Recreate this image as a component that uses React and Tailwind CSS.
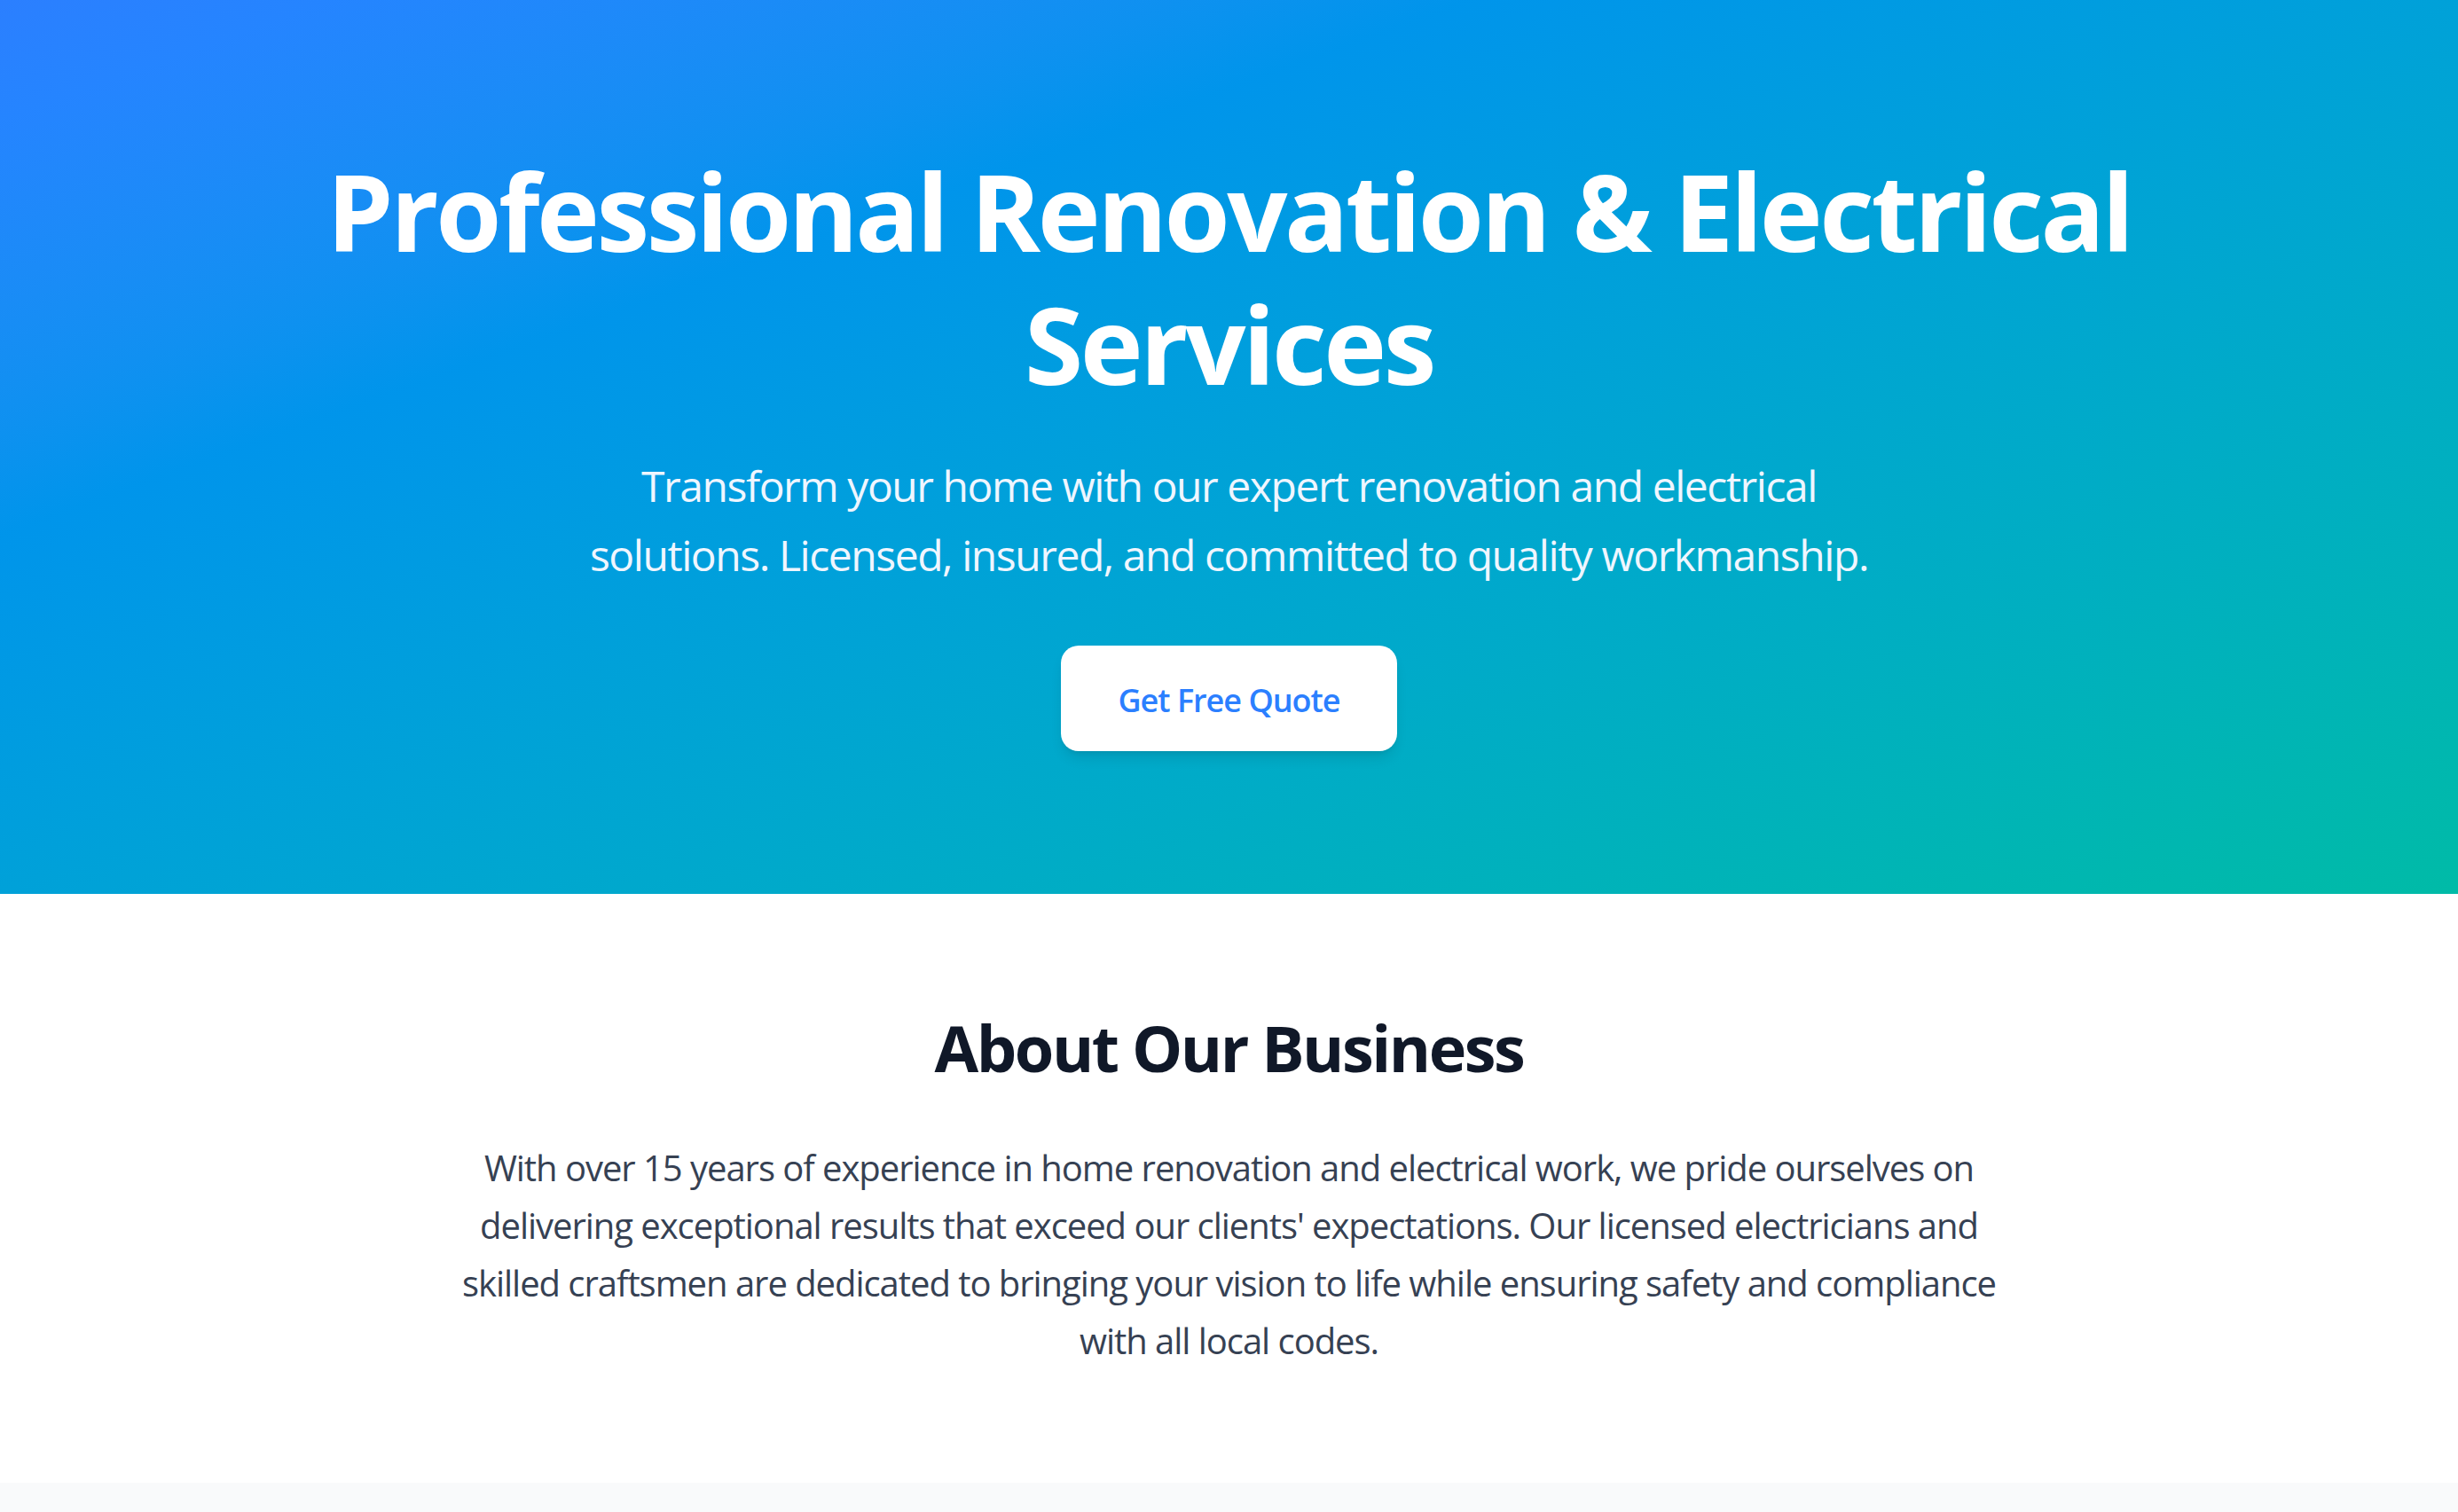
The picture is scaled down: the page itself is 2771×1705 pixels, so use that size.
import React from 'react';

// ── Hero ──────────────────────────────────────────────────────────────────────
function Hero() {
  return (
    <section className="bg-linear-to-br from-blue-500 to-teal-500 text-white text-center px-10 pt-[163px] pb-[161px]">
      <h1 className="mx-auto max-w-[2240px] text-[120px] leading-[150px] font-bold tracking-[-0.029em]">
        Professional Renovation &amp; Electrical Services
      </h1>
      <p className="mx-auto mt-[46px] max-w-[1500px] text-[48px] leading-[78px] tracking-[-0.03em] text-blue-50">
        Transform your home with our expert renovation and electrical solutions. Licensed, insured, and committed to quality workmanship.
      </p>
      <button className="mt-[63px] h-[119px] px-[64px] pt-[4px] rounded-[20px] bg-white text-blue-500 text-[36px] font-semibold tracking-[-0.028em] shadow-lg hover:bg-blue-50 transition-colors">
        Get Free Quote
      </button>
    </section>
  );
}

// ── About ─────────────────────────────────────────────────────────────────────
function About() {
  return (
    <section className="bg-white text-center px-10 pt-[128px] pb-[128px]">
      <h2 className="text-[72px] leading-[90px] font-bold tracking-[-0.034em] text-gray-900">About Our Business</h2>
      <p className="mx-auto mt-[58px] max-w-[1780px] text-[40px] leading-[65px] tracking-[-0.026em] text-gray-700">
        With over 15 years of experience in home renovation and electrical work, we pride ourselves on delivering exceptional results that exceed our clients' expectations. Our licensed electricians and skilled craftsmen are dedicated to bringing your vision to life while ensuring safety and compliance with all local codes.
      </p>
    </section>
  );
}

export default function App() {
  return (
    <div className="min-h-screen bg-white font-['Open_Sans','Noto_Sans',sans-serif]">
      <Hero />
      <About />
      {/* next section starts below the fold */}
      <section className="bg-gray-50 h-[240px]" />
    </div>
  );
}
